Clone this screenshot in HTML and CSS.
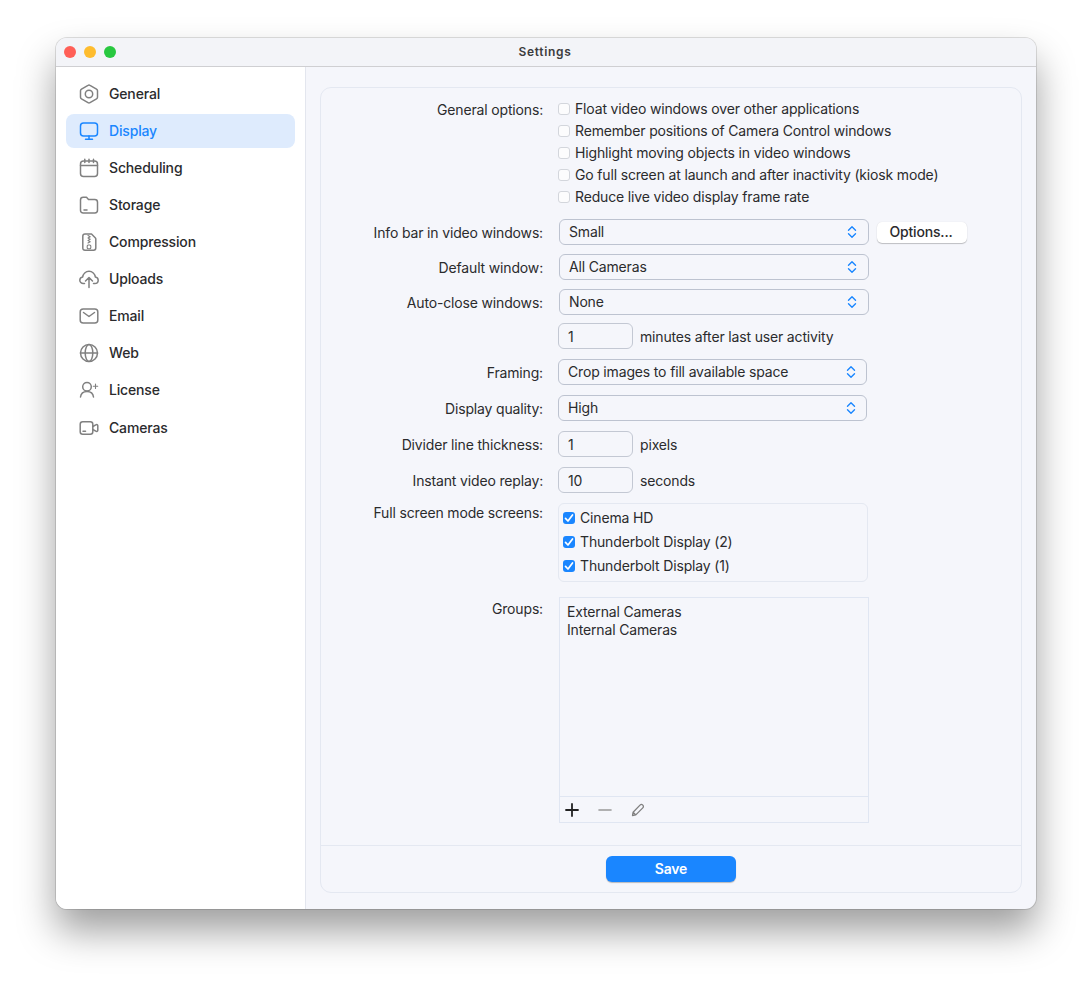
FILE: index.html
```html
<!DOCTYPE html>
<html lang="en">
<head>
  <meta charset="UTF-8">
  <title>Settings</title>
  <link rel="stylesheet" href="styles.css">
</head>
<body>
  <div class="window">
    <div class="titlebar">
      <div class="lights">
        <span class="light red"></span>
        <span class="light yellow"></span>
        <span class="light green"></span>
      </div>
      <div class="title">Settings</div>
    </div>

    <div class="main">
      <nav class="sidebar">
        <a class="nav-item">
          <svg class="nav-icon" viewBox="0 0 20 20"><path d="M9 1.300c.6-.4 1.400-.4 2 0l6.500 3.800c.6.400 1 1 1 1.700v6.400c0 .7-.4 1.300-1 1.700L11 18.700c-.6.400-1.400.4-2 0l-6.500-3.800c-.6-.4-1-1-1-1.700V6.800c0-.7.4-1.300 1-1.700z"/><circle cx="10" cy="10" r="3.700"/></svg>
          <span>General</span>
        </a>
        <a class="nav-item active">
          <svg class="nav-icon" viewBox="0 0 20 20"><rect x="1.500" y="2" width="17" height="13" rx="3"/><path d="M10 15v3M6.500 18.300h7"/></svg>
          <span>Display</span>
        </a>
        <a class="nav-item">
          <svg class="nav-icon" viewBox="0 0 20 20"><rect x="1.500" y="3" width="17" height="15.500" rx="3"/><path d="M1.500 7.500h17M5.800 1.300v3.200M10 1.300v3.200M14.500 1.300v3.200"/></svg>
          <span>Scheduling</span>
        </a>
        <a class="nav-item">
          <svg class="nav-icon" viewBox="0 0 20 20"><path d="M1.500 5c0-1.700 1-2.700 2.700-2.700h3.300l2 2.200h6.300c1.700 0 2.700 1 2.700 2.700v8c0 1.700-1 2.700-2.700 2.700H4.200c-1.700 0-2.700-1-2.700-2.700z"/><path d="M5 15h3"/></svg>
          <span>Storage</span>
        </a>
        <a class="nav-item">
          <svg class="nav-icon" viewBox="0 0 20 20"><path d="M6 2h6.500l3.700 3.700c.4.400.6.800.6 1.300v9c0 1.400-.8 2.200-2.200 2.200H6c-1.400 0-2.200-.8-2.200-2.200V4.200C3.800 2.800 4.600 2 6 2z"/><path class="thin" d="M9 3.500l2.200 1.200L9 6l2.200 1.200L9 8.500l2.200 1.200L9 11"/><rect class="thin" x="8.200" y="13" width="3.600" height="3.800" rx="1"/></svg>
          <span>Compression</span>
        </a>
        <a class="nav-item">
          <svg class="nav-icon" viewBox="0 0 20 20"><path d="M5.500 14.500H4.300C2.300 14.500.8 13 .8 11.200c0-1.700 1.300-3 2.900-3.200C4 4.800 6.700 2.300 10 2.300s6 2.500 6.300 5.700c1.600.2 2.900 1.500 2.900 3.200 0 1.800-1.500 3.300-3.500 3.300h-1.200"/><path d="M10 18.500V9M6.500 12L10 8.500l3.500 3.500"/></svg>
          <span>Uploads</span>
        </a>
        <a class="nav-item">
          <svg class="nav-icon" viewBox="0 0 20 20"><rect x="1.200" y="3" width="17.600" height="14" rx="3"/><path d="M4.500 6.500L10 10.500l5.500-4"/></svg>
          <span>Email</span>
        </a>
        <a class="nav-item">
          <svg class="nav-icon" viewBox="0 0 20 20"><circle cx="10" cy="10" r="8.500"/><ellipse cx="10" cy="10" rx="3.800" ry="8.500"/><path d="M1.500 10h17"/></svg>
          <span>Web</span>
        </a>
        <a class="nav-item">
          <svg class="nav-icon" viewBox="0 0 20 20"><circle cx="8" cy="6.800" r="4.300"/><path d="M1.500 17c.4-3.200 3-5.500 6.500-5.500s6.100 2.300 6.500 5.500"/><path class="thin" d="M16.500 4v4.400M14.300 6.200h4.400"/></svg>
          <span>License</span>
        </a>
        <a class="nav-item cameras">
          <svg class="nav-icon" viewBox="0 0 20 20"><rect x="1.200" y="3.700" width="12.600" height="12.600" rx="2.500"/><path d="M13.800 8.500l3-1.700c1-.5 2 0 2 1v4.400c0 1-1 1.500-2 1l-3-1.700"/><path d="M4 13.300h2.500"/></svg>
          <span>Cameras</span>
        </a>
      </nav>

      <div class="content">
        <div class="panel">
          <div class="form">
            <div class="row">
              <label class="field-label">General options:</label>
              <div class="checks">
                <div class="check"><span class="box"></span>Float video windows over other applications</div>
                <div class="check"><span class="box"></span>Remember positions of Camera Control windows</div>
                <div class="check"><span class="box"></span>Highlight moving objects in video windows</div>
                <div class="check"><span class="box"></span>Go full screen at launch and after inactivity (kiosk mode)</div>
                <div class="check"><span class="box"></span>Reduce live video display frame rate</div>
              </div>
            </div>

            <div class="row row-info">
              <label class="field-label centered shift">Info bar in video windows:</label>
              <div class="select wide">
                <span>Small</span>
                <svg class="chevrons" viewBox="0 0 10 14"><path d="M1.500 5.200L5 1.700l3.500 3.500M1.500 8.800L5 12.300l3.500-3.500"/></svg>
              </div>
              <button class="button">Options...</button>
            </div>

            <div class="row row-tight">
              <label class="field-label centered shift">Default window:</label>
              <div class="select wide">
                <span>All Cameras</span>
                <svg class="chevrons" viewBox="0 0 10 14"><path d="M1.500 5.200L5 1.700l3.500 3.500M1.500 8.800L5 12.300l3.500-3.500"/></svg>
              </div>
            </div>

            <div class="row row-tight">
              <label class="field-label centered shift">Auto-close windows:</label>
              <div class="select wide">
                <span>None</span>
                <svg class="chevrons" viewBox="0 0 10 14"><path d="M1.500 5.200L5 1.700l3.500 3.500M1.500 8.800L5 12.300l3.500-3.500"/></svg>
              </div>
            </div>

            <div class="row row-minutes">
              <span class="field-label"></span>
              <input class="number" type="text" value="1">
              <span class="suffix">minutes after last user activity</span>
            </div>

            <div class="row">
              <label class="field-label centered">Framing:</label>
              <div class="select">
                <span>Crop images to fill available space</span>
                <svg class="chevrons" viewBox="0 0 10 14"><path d="M1.500 5.200L5 1.700l3.500 3.500M1.500 8.800L5 12.300l3.500-3.500"/></svg>
              </div>
            </div>

            <div class="row">
              <label class="field-label centered">Display quality:</label>
              <div class="select">
                <span>High</span>
                <svg class="chevrons" viewBox="0 0 10 14"><path d="M1.500 5.200L5 1.700l3.500 3.500M1.500 8.800L5 12.300l3.500-3.500"/></svg>
              </div>
            </div>

            <div class="row">
              <label class="field-label centered">Divider line thickness:</label>
              <input class="number" type="text" value="1">
              <span class="suffix">pixels</span>
            </div>

            <div class="row">
              <label class="field-label centered">Instant video replay:</label>
              <input class="number" type="text" value="10">
              <span class="suffix">seconds</span>
            </div>

            <div class="row">
              <label class="field-label screens-label">Full screen mode screens:</label>
              <div class="screens">
                <div class="screen"><span class="tick"><svg viewBox="0 0 12 12"><path d="M2.500 6.300l2.500 2.700 4.500-6"/></svg></span>Cinema HD</div>
                <div class="screen"><span class="tick"><svg viewBox="0 0 12 12"><path d="M2.500 6.300l2.500 2.700 4.500-6"/></svg></span>Thunderbolt Display (2)</div>
                <div class="screen"><span class="tick"><svg viewBox="0 0 12 12"><path d="M2.500 6.300l2.500 2.700 4.500-6"/></svg></span>Thunderbolt Display (1)</div>
              </div>
            </div>

            <div class="row row-groups">
              <label class="field-label shift">Groups:</label>
              <div class="groups">
                <div class="groups-list">
                  <div>External Cameras</div>
                  <div>Internal Cameras</div>
                </div>
                <div class="groups-tools">
                  <svg class="tool" viewBox="0 0 14 14"><path class="dark" d="M7 1v12M1 7h12"/></svg>
                  <svg class="tool" viewBox="0 0 14 14"><path class="grey" d="M1 7h12"/></svg>
                  <svg class="tool" viewBox="0 0 14 14"><path class="pencil" d="M1.500 12.500l.6-3.300L9 2.100c.8-.8 2-.8 2.800 0 .8.800.8 2 0 2.800L4.800 11.900zM2.100 9.200l2.700 2.700"/></svg>
                </div>
              </div>
            </div>
          </div>

          <div class="footer">
            <button class="save">Save</button>
          </div>
        </div>
      </div>
    </div>
  </div>
</body>
</html>
```

FILE: styles.css
```css
* { box-sizing: border-box; }

html, body { margin: 0; height: 100%; background: #fff; }

body {
  padding: 38px 56px 0;
  font-family: Inter, "Liberation Sans", sans-serif;
  font-size: 14px;
  letter-spacing: -.16px;
  color: #2b2b2d;
  overflow: hidden;
}

.window {
  width: 980px;
  height: 871px;
  border-radius: 11px;
  overflow: hidden;
  background: #f5f6fb;
  box-shadow: 0 0 0 1px rgba(0, 0, 0, .12), 0 22px 38px rgba(0, 0, 0, .38);
  display: flex;
  flex-direction: column;
}

.titlebar {
  height: 29px;
  flex: none;
  background: #f3f4f8;
  border-bottom: 1px solid #cfcfd2;
  display: flex;
  align-items: center;
  justify-content: center;
  position: relative;
}

.lights { position: absolute; left: 8px; top: 8px; display: flex; gap: 8px; }
.light { width: 12px; height: 12px; border-radius: 50%; }
.red { background: #ff5f57; }
.yellow { background: #febc2e; }
.green { background: #28c840; }

.title {
  font-size: 12px;
  font-weight: 600;
  letter-spacing: .7px;
  color: #3c3c3e;
  padding: 0 2px 2px 0;
}

.main { flex: 1; display: flex; min-height: 0; }

.sidebar {
  width: 250px;
  flex: none;
  background: #fff;
  border-right: 1px solid #e3e6ee;
  padding: 10px 10px 0;
  display: flex;
  flex-direction: column;
  gap: 3px;
}

.nav-item {
  height: 34px;
  width: 229px;
  border-radius: 8px;
  padding-left: 13px;
  display: flex;
  align-items: center;
  gap: 10px;
  font-weight: 500;
}

.nav-item span { margin-top: -2px; }
.nav-item.active { background: #deebfd; color: #1a86ff; }
.nav-item.cameras { margin-top: 1px; }

.nav-icon {
  width: 20px;
  height: 20px;
  flex: none;
  fill: none;
  stroke: #808080;
  stroke-width: 1.500;
  stroke-linecap: round;
  stroke-linejoin: round;
}

.nav-icon .thin { stroke-width: 1.100; }
.active .nav-icon { stroke: #1a86ff; }

.content { flex: 1; padding: 20px 14px 16px 14px; }

.panel {
  height: 100%;
  border: 1px solid #e4e8f1;
  border-radius: 11px;
  display: flex;
  flex-direction: column;
}

.form { flex: 1; padding-top: 10px; }

.row { display: flex; align-items: flex-start; margin-top: 10px; }
.row:first-child { margin-top: 0; }
.row-info { margin-top: 11px; align-items: center; }
.row-tight { margin-top: 9px; }
.row-minutes { margin-top: 8px; }
.row-groups { margin-top: 15px; }

.field-label {
  width: 222px;
  flex: none;
  text-align: right;
  margin-right: 15px;
  line-height: 22px;
  padding-top: 1px;
}

.field-label.centered { height: 26px; line-height: 26px; }
.field-label.shift { margin-right: 16px; }
.field-label.screens-label { padding-top: 0; line-height: 20px; }

.checks { display: flex; flex-direction: column; }

.check { height: 22px; display: flex; align-items: center; gap: 5px; padding-bottom: 2px; }

.box {
  width: 12px;
  height: 12px;
  margin-top: 2px;
  background: #fcfcfd;
  border: 1px solid #d3d6dc;
  border-radius: 3px;
}

.select {
  width: 309px;
  height: 26px;
  flex: none;
  background: #f5f6fb;
  border: 1px solid #bdc3d0;
  border-radius: 6px;
  padding: 0 10px 0 9px;
  display: flex;
  align-items: center;
  justify-content: space-between;
}

.select span { margin-top: -2px; }
.select.wide { width: 310px; padding-right: 11px; }

.chevrons {
  width: 10px;
  height: 14px;
  fill: none;
  stroke: #1a86ff;
  stroke-width: 1.400;
  stroke-linecap: round;
  stroke-linejoin: round;
}

.button {
  width: 90px;
  height: 21px;
  margin-left: 8px;
  background: #fff;
  border: 0;
  border-radius: 5px;
  box-shadow: 0 1px 1px rgba(0, 0, 0, .22), 0 0 1px rgba(0, 0, 0, .12);
  font: 500 14px Inter, "Liberation Sans", sans-serif;
  letter-spacing: -.16px;
  color: #2b2b2d;
  padding: 0 2px 2px 0;
}

.number {
  width: 75px;
  height: 26px;
  flex: none;
  background: #f5f6fb;
  border: 1px solid #c3c8d3;
  border-radius: 6px;
  padding: 0 9px;
  font: 14px Inter, "Liberation Sans", sans-serif;
  letter-spacing: -.16px;
  color: #2b2b2d;
}

.suffix { margin-left: 7px; height: 26px; line-height: 26px; padding-top: 1px; }

.screens {
  width: 310px;
  height: 79px;
  flex: none;
  border: 1px solid #e4e8f1;
  border-radius: 6px;
  padding-top: 2px;
}

.screen { height: 24px; display: flex; align-items: center; gap: 5px; padding: 0 0 2px 4px; }

.tick {
  width: 12px;
  height: 12px;
  margin-top: 2px;
  background: #1a86ff;
  border-radius: 3px;
  display: flex;
}

.tick svg { fill: none; stroke: #fff; stroke-width: 1.700; stroke-linecap: round; stroke-linejoin: round; }

.groups {
  width: 310px;
  height: 226px;
  flex: none;
  border: 1px solid #e0e6f2;
  display: flex;
  flex-direction: column;
}

.groups-list { flex: 1; padding: 5px 7px; line-height: 18px; }

.groups-tools {
  height: 26px;
  border-top: 1px solid #e0e6f2;
  display: flex;
  align-items: center;
  gap: 19px;
  padding-left: 5px;
}

.tool { width: 14px; height: 14px; fill: none; stroke-linecap: round; stroke-linejoin: round; }
.dark { stroke: #222; stroke-width: 1.800; }
.grey { stroke: #999; stroke-width: 1.600; }
.pencil { stroke: #808080; stroke-width: 1.300; }

.footer {
  height: 47px;
  flex: none;
  border-top: 1px solid #e4e8f1;
  display: flex;
  justify-content: center;
  padding-top: 10px;
}

.save {
  width: 130px;
  height: 26px;
  background: #1a86ff;
  border: 0;
  border-radius: 6px;
  box-shadow: 0 1px 1px rgba(0, 0, 0, .25);
  color: #fff;
  font: 600 14px Inter, "Liberation Sans", sans-serif;
  letter-spacing: -.16px;
  padding: 0 0 2px;
}
```
